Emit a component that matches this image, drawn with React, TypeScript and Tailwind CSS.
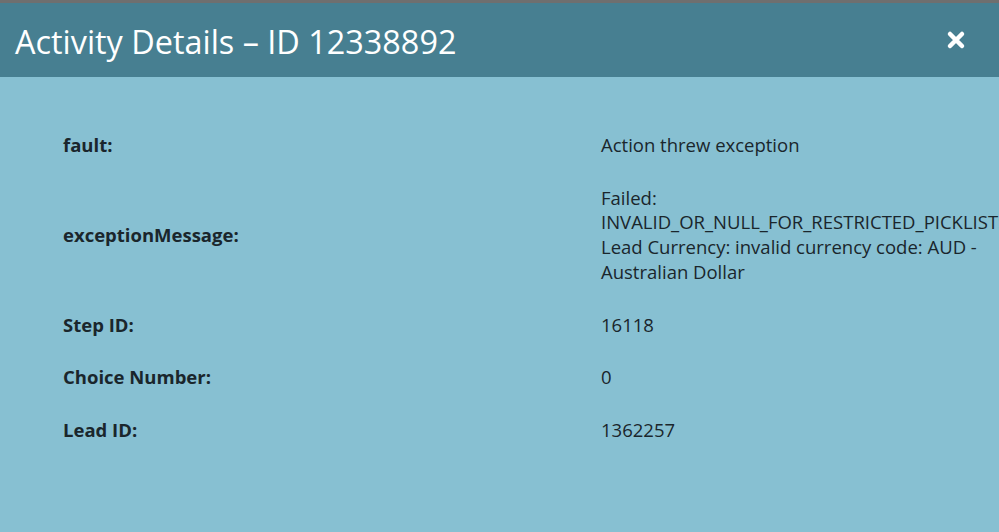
import React from 'react';

// Activity detail rows
const rows: { label: string; lines: string[] }[] = [
    { label: 'fault:', lines: ['Action threw exception'] },
    {
        label: 'exceptionMessage:',
        lines: [
            'Failed:',
            'INVALID_OR_NULL_FOR_RESTRICTED_PICKLIST:',
            'Lead Currency: invalid currency code: AUD -',
            'Australian Dollar',
        ],
    },
    { label: 'Step ID:', lines: ['16118'] },
    { label: 'Choice Number:', lines: ['0'] },
    { label: 'Lead ID:', lines: ['1362257'] },
];

export default function App() {
    return (
        <div
            className="w-[999px] h-[532px] overflow-hidden bg-[#87c0d2] flex flex-col"
            style={{ fontFamily: '"Open Sans", "Liberation Sans", sans-serif' }}
        >
            {/* Top strip */}
            <div className="h-[3px] bg-[#6f6f6f]" />

            {/* Header */}
            <div className="h-[74px] bg-[#477f91] flex items-center justify-between pl-[15px] pr-[33px]">
                <h1 className="text-[32.4px] text-white leading-none pt-[2px] whitespace-nowrap">
                    Activity Details – ID 12338892
                </h1>
                <button className="w-[20px] h-[20px] flex items-center justify-center">
                    <svg viewBox="0 0 20 20" className="w-[20px] h-[20px]">
                        <path
                            d="M4 4 L16 16 M16 4 L4 16"
                            stroke="white"
                            strokeWidth="4.5"
                            strokeLinecap="round"
                        />
                    </svg>
                </button>
            </div>

            {/* Details table */}
            <div className="pt-[42px] pl-[63px] text-[#1a262c] text-[18.5px] leading-[24.7px]">
                {rows.map((row) => (
                    <div key={row.label} className="flex items-center py-[14px]">
                        <div className="w-[538px] shrink-0 font-bold">{row.label}</div>
                        <div className="whitespace-nowrap">
                            {row.lines.map((line) => (
                                <div key={line}>{line}</div>
                            ))}
                        </div>
                    </div>
                ))}
            </div>
        </div>
    );
}
